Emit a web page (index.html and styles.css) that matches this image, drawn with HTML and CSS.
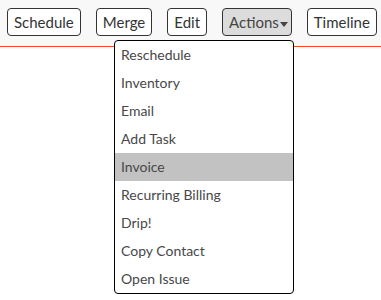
FILE: index.html
```html
<!DOCTYPE html>
<html lang="en">
<head>
    <meta charset="UTF-8">
    <meta name="viewport" content="width=device-width, initial-scale=1.0">
    <title>Actions</title>
    <link rel="stylesheet" href="styles.css">
</head>
<body>
    <header class="toolbar">
        <button class="btn">Schedule</button>
        <button class="btn">Merge</button>
        <button class="btn">Edit</button>
        <button class="btn btn-active">Actions<span class="caret"></span></button>
        <button class="btn">Timeline</button>
    </header>
    <!-- Actions dropdown, open -->
    <ul class="menu">
        <li>Reschedule</li>
        <li>Inventory</li>
        <li>Email</li>
        <li>Add Task</li>
        <li class="hover">Invoice</li>
        <li>Recurring Billing</li>
        <li>Drip!</li>
        <li>Copy Contact</li>
        <li>Open Issue</li>
    </ul>
</body>
</html>
```

FILE: styles.css
```css
body {
    margin: 0;
    padding: 0;
    background-color: #ffffff;
    font-family: Lato, "Liberation Sans", sans-serif;
    color: #444;
}
.toolbar {
    display: flex;
    align-items: flex-start;
    gap: 15px;
    height: 47px;
    box-sizing: border-box;
    padding: 8px 0 0 7px;
    background-color: #f8f8f8;
    border-bottom: 1px solid #e9502b;
}
.btn {
    flex-shrink: 0;
    height: 28px;
    padding: 0 6px;
    background-color: #ffffff;
    border: 1px solid #333;
    border-radius: 4px;
    font-family: inherit;
    font-size: 15px;
    color: #333;
    white-space: nowrap;
    cursor: pointer;
}
.btn-active {
    padding-right: 3px;
    background-color: #dcdcdc;
    color: #444;
}
.caret {
    display: inline-block;
    margin-left: 1px;
    vertical-align: middle;
    border-left: 4px solid transparent;
    border-right: 4px solid transparent;
    border-top: 5px solid #444;
}
.menu {
    width: 178px;
    margin: -7px 0 0 114px;
    padding: 0;
    list-style: none;
    background-color: #ffffff;
    border: 1px solid #000;
    border-radius: 4px;
    overflow: hidden;
}
.menu li {
    height: 28px;
    line-height: 28px;
    padding: 0 6px;
    font-size: 14px;
    color: #484848;
}
.menu li.hover {
    background-color: #c2c2c2;
}
```
